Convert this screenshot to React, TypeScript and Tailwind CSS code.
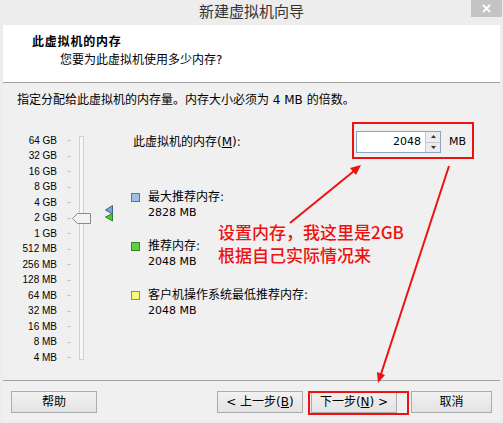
import type { ReactNode } from "react";

const SCALE = [
  "64 GB",
  "32 GB",
  "16 GB",
  "8 GB",
  "4 GB",
  "2 GB",
  "1 GB",
  "512 MB",
  "256 MB",
  "128 MB",
  "64 MB",
  "32 MB",
  "16 MB",
  "8 MB",
  "4 MB",
];

const LEGEND = [
  { label: "最大推荐内存:", value: "2828 MB", swatch: "bg-[#9fc0e2] border-[#52779f]" },
  { label: "推荐内存:", value: "2048 MB", swatch: "bg-[#5fd044] border-[#2f8a24]" },
  { label: "客户机操作系统最低推荐内存:", value: "2048 MB", swatch: "bg-[#fbfb7a] border-[#8f8f5a]" },
];

const cjk = "font-['DejaVu_Sans','Noto_Sans_CJK_SC',sans-serif]";

const WizardButton = ({ children, className = "" }: { children: ReactNode; className?: string }) => (
  <button
    className={`h-[22px] border border-[#acacac] bg-gradient-to-b from-[#f2f2f2] to-[#e3e3e3] text-[12px] text-black ${className}`}
  >
    {children}
  </button>
);

const MemorySlider = () => (
  <div className="relative flex items-start">
    <div className="flex flex-col">
      {SCALE.map((label) => (
        <div key={label} className="flex h-[15.5px] items-center">
          <span className="w-[40px] text-right font-['Liberation_Sans',sans-serif] text-[10px] leading-none text-black">
            {label}
          </span>
          <span className="ml-[10px] h-px w-[4px] bg-[#c6c6c6]" />
        </div>
      ))}
    </div>
    <div className="ml-[8px] mt-[3px] h-[224px] w-[5px] border border-[#d2d2d2] bg-[#f7f7f7]" />

    {/* thumb sits at 2 GB */}
    <svg className="absolute left-[55px] top-[80px]" width="19" height="12" viewBox="0 0 19 12">
      <polygon points="0.5,5.5 5.5,0.5 18.5,0.5 18.5,10.5 5.5,10.5" fill="#f3f3f3" stroke="#8a8a8a" />
    </svg>

    {/* recommended / max markers */}
    <svg className="absolute left-[88px] top-[72px]" width="9" height="17" viewBox="0 0 9 17">
      <polygon points="0.5,5 7.5,0.5 7.5,9" fill="#7ba3d6" stroke="#3d5f96" />
      <polygon points="0.5,12 7.5,8.5 7.5,16" fill="#55c83c" stroke="#2c8420" />
    </svg>
  </div>
);

const App = () => {
  return (
    <div className={`relative flex h-[423px] w-[503px] flex-col overflow-hidden bg-[#ededed] ${cjk}`}>
      {/* title bar */}
      <div className="grid h-[25px] grid-cols-[1fr_auto_1fr]">
        <div />
        <div className="pt-[2px] text-[15px] leading-[20px] text-[#333]">新建虚拟机向导</div>
        <div className="flex justify-end">
          <div className="mr-[1px] flex h-[17px] w-[31px] items-center justify-center bg-[#c4c4c4]">
            <svg width="9" height="9" viewBox="0 0 9 9">
              <path d="M1 1 L8 8 M8 1 L1 8" stroke="#fff" strokeWidth="1.8" />
            </svg>
          </div>
        </div>
      </div>

      <div className="mx-[3px] mb-[3px] flex flex-1 flex-col bg-[#f0f0f0]">
        {/* header */}
        <div className="h-[58px] border-b border-[#a0a0a0] bg-white pl-[29px] pt-[9px]">
          <div className="text-[12px] font-bold leading-[16px] tracking-[0.8px] text-black">此虚拟机的内存</div>
          <div className="mt-[2px] pl-[28px] text-[12px] leading-[16px] text-black">您要为此虚拟机使用多少内存?</div>
        </div>

        {/* body */}
        <div className="flex flex-1 flex-col px-[14px] pt-[9px]">
          <div className="text-[12px] leading-[16px] text-black">
            指定分配给此虚拟机的内存量。内存大小必须为 4 MB 的倍数。
          </div>

          <div className="flex items-start">
            <div className="mt-[25px]">
              <MemorySlider />
            </div>

            <div className="ml-[47px] flex flex-col">
              <div className="mt-[23px] flex h-[22px] items-center">
                <span className="w-[225px] pl-[2px] text-[12px] text-black">
                  此虚拟机的内存(<span className="underline">M</span>):
                </span>
                <div className="flex h-[22px] w-[85px] shrink-0 border border-[#8aa6c4] bg-white">
                  <span className="flex-1 pr-[4px] text-right text-[11px] leading-[20px] text-black">2048</span>
                  <div className="flex w-[15px] flex-col border-l border-[#c9c9c9] bg-[#ececec]">
                    <div className="flex flex-1 items-center justify-center border-b border-[#c9c9c9]">
                      <svg width="5" height="3" viewBox="0 0 5 3">
                        <polygon points="2.5,0 5,3 0,3" fill="#333" />
                      </svg>
                    </div>
                    <div className="flex flex-1 items-center justify-center">
                      <svg width="5" height="3" viewBox="0 0 5 3">
                        <polygon points="0,0 5,0 2.5,3" fill="#333" />
                      </svg>
                    </div>
                  </div>
                </div>
                <span className="ml-[8px] text-[11px] text-black">MB</span>
              </div>

              <div className="mt-[36px] flex flex-col gap-[17px]">
                {LEGEND.map((item) => (
                  <div key={item.label} className="flex items-start">
                    <span className={`mt-[4px] h-[9px] w-[9px] border ${item.swatch}`} />
                    <div className="ml-[8px] flex flex-col">
                      <span className="text-[12px] leading-[16px] text-black">{item.label}</span>
                      <span className="text-[11px] leading-[16px] text-black">{item.value}</span>
                    </div>
                  </div>
                ))}
              </div>
            </div>
          </div>
        </div>

        {/* footer */}
        <div className="flex h-[40px] items-start border-t border-[#a0a0a0] px-[8px] pt-[10px]">
          <WizardButton className="w-[86px]">帮助</WizardButton>
          <WizardButton className="ml-auto w-[86px]">
            &lt; 上一步(<span className="underline">B</span>)
          </WizardButton>
          <WizardButton className="ml-[8px] w-[86px]">
            下一步(<span className="underline">N</span>) &gt;
          </WizardButton>
          <WizardButton className="ml-[14px] w-[81px]">取消</WizardButton>
        </div>
      </div>

      {/* red markup drawn over the dialog */}
      <svg className="pointer-events-none absolute left-0 top-0" width="503" height="423" viewBox="0 0 503 423">
        <rect x="353" y="123" width="120" height="35" fill="none" stroke="#ee1111" strokeWidth="2" />
        <rect x="309" y="392" width="99" height="22" fill="none" stroke="#ee1111" strokeWidth="2" />
        <line x1="290" y1="223" x2="354" y2="171" stroke="#ee1111" strokeWidth="2" />
        <polygon points="361,165 356,175 350,168" fill="#ee1111" />
        <line x1="449" y1="166" x2="381" y2="374" stroke="#ee1111" strokeWidth="2" />
        <polygon points="378,383 385,375 377,372" fill="#ee1111" />
      </svg>
      <div className="pointer-events-none absolute left-[218px] top-[220px] font-['Noto_Sans_CJK_SC',sans-serif] text-[17px] font-medium leading-[23px] text-[#ee1111]">
        <div>设置内存，我这里是2GB</div>
        <div>根据自己实际情况来</div>
      </div>
    </div>
  );
};

export default App;
